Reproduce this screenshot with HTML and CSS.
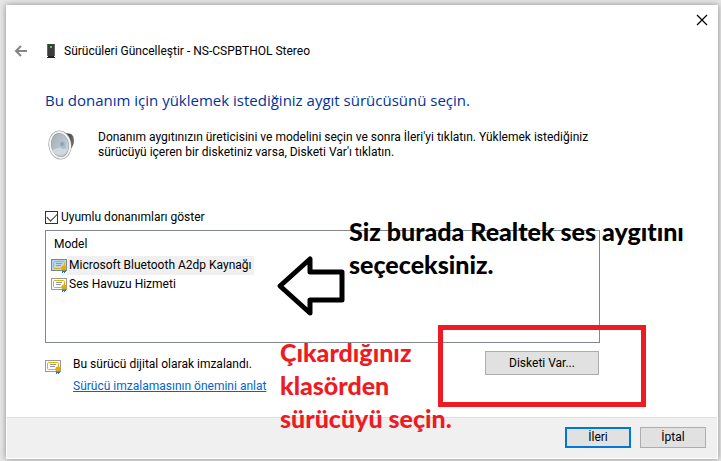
FILE: index.html
```html
<!DOCTYPE html>
<html lang="tr">
<head>
    <meta charset="UTF-8">
    <meta name="viewport" content="width=device-width, initial-scale=1.0">
    <title>Sürücüleri Güncelleştir</title>
    <link rel="stylesheet" href="styles.css">
</head>
<body>
    <svg class="symbols" aria-hidden="true">
        <symbol id="certificate" viewBox="0 0 16 14">
            <rect class="paper" x="0.5" y="0.5" width="15" height="11"/>
            <rect x="2.5" y="2.5" width="11" height="7" rx="1" fill="none" stroke="#e5b000"/>
            <path d="M5 4.5h6M5 6.5h5" stroke="#8f98a3"/>
            <path d="M11 11h4v2h-1v1h-1v-1h-1v1h-1z" fill="#1c78d0"/>
            <circle cx="13" cy="9" r="2.6" fill="#e5ab00"/>
        </symbol>
    </svg>

    <main class="dialog">
        <div class="titlebar">
            <button class="close" type="button" aria-label="Kapat">
                <svg width="12" height="12" viewBox="0 0 12 12"><path d="M1 1l10 10M11 1L1 11" stroke="#000" stroke-width="1.2"/></svg>
            </button>
        </div>

        <header>
            <button class="back" type="button" aria-label="Geri">
                <svg width="14" height="12" viewBox="0 0 14 12"><path d="M13 6H2M7 1L2 6l5 5" fill="none" stroke="#858585" stroke-width="2"/></svg>
            </button>
            <svg class="device" width="10" height="16" viewBox="0 0 10 16">
                <path d="M1 1h8v12H1z" fill="#3c3c3c"/>
                <path d="M1 1h1v12H1zM8 1h1v12H8z" fill="#666"/>
                <path d="M4 3h2v2H4z" fill="#36dd42"/>
                <path d="M2 13h6v1H2zM1 14h8v1H1z" fill="#222"/>
            </svg>
            <span>Sürücüleri Güncelleştir - NS-CSPBTHOL Stereo</span>
        </header>

        <div class="content">
            <h1>Bu donanım için yüklemek istediğiniz aygıt sürücüsünü seçin.</h1>

            <div class="intro">
                <svg class="speaker" width="28" height="30" viewBox="0 0 28 30">
                    <defs>
                        <linearGradient id="cone" x1="0" y1="0" x2="1" y2="1">
                            <stop offset="0" stop-color="#9aa8af"/>
                            <stop offset="1" stop-color="#d5dfe4"/>
                        </linearGradient>
                        <linearGradient id="magnet" x1="0" y1="0" x2="1" y2="0">
                            <stop offset="0" stop-color="#aaa"/>
                            <stop offset="0.7" stop-color="#4a4a4a"/>
                            <stop offset="1" stop-color="#777"/>
                        </linearGradient>
                    </defs>
                    <path d="M10 1l8 2 5 1c3 2 3 5 3 8-1 5-3 7-6 8l-7 7z" fill="url(#magnet)"/>
                    <ellipse cx="12" cy="15" rx="10" ry="13" transform="rotate(-8 12 15)" fill="url(#cone)" stroke="#8f8f8f" stroke-width="3"/>
                    <ellipse cx="12" cy="15" rx="10" ry="13" transform="rotate(-8 12 15)" fill="none" stroke="#f3f3f3" stroke-width="2"/>
                    <path d="M4 20c3 6 10 7 15 1l-5-4z" fill="#cfdae0"/>
                    <ellipse cx="15" cy="15" rx="3" ry="4" fill="#a9bec8"/>
                    <ellipse cx="14" cy="14" rx="2" ry="2" fill="#86a7b8"/>
                </svg>
                <p>Donanım aygıtınızın üreticisini ve modelini seçin ve sonra İleri'yi tıklatın. Yüklemek istediğiniz<br>sürücüyü içeren bir disketiniz varsa, Disketi Var'ı tıklatın.</p>
            </div>

            <label class="compatible">
                <input type="checkbox" checked>
                <span>Uyumlu donanımları göster</span>
            </label>

            <div class="models">
                <div class="models-head">Model</div>
                <ul>
                    <li class="selected"><svg class="cert"><use href="#certificate"/></svg><span>Microsoft Bluetooth A2dp Kaynağı</span></li>
                    <li><svg class="cert"><use href="#certificate"/></svg><span>Ses Havuzu Hizmeti</span></li>
                </ul>

                <svg class="arrow" width="70" height="62" viewBox="0 0 70 62">
                    <path d="M4 31L34 4v13h32v28H34v13z" fill="#fff" stroke="#000" stroke-width="5" stroke-linejoin="round"/>
                </svg>
                <p class="note note-black">Siz burada Realtek ses aygıtını<br>seçeceksiniz.</p>
                <p class="note note-red">Çıkardığınız<br>klasörden<br>sürücüyü seçin.</p>
            </div>

            <div class="signed">
                <svg class="cert"><use href="#certificate"/></svg>
                <div class="signed-text">
                    <p>Bu sürücü dijital olarak imzalandı.</p>
                    <a href="#">Sürücü imzalamasının önemini anlat</a>
                </div>
                <div class="disk">
                    <button class="btn btn-disk" type="button">Disketi Var...</button>
                    <div class="frame"></div>
                </div>
            </div>
        </div>

        <footer>
            <button class="btn btn-default" type="button">İleri</button>
            <button class="btn" type="button">İptal</button>
        </footer>
    </main>
</body>
</html>
```
FILE: styles.css
```css
* {
    box-sizing: border-box;
}

body {
    margin: 0;
    padding: 5px 3px 2px 6px;
    min-height: 100vh;
    display: flex;
    background-color: #e6e6e6;
    color: #000;
    font-family: Roboto, "Noto Sans", sans-serif;
    font-size: 12px;
    line-height: 15px;
}

p, h1, ul {
    margin: 0;
    padding: 0;
}

button {
    font: inherit;
    color: inherit;
    padding: 0;
}

.symbols {
    position: absolute;
    width: 0;
    height: 0;
}

.dialog {
    flex: 1;
    min-width: 0;
    display: flex;
    flex-direction: column;
    background-color: #fff;
    border: 1px solid #fff;
    box-shadow: 0 0 6px rgba(0, 0, 0, 0.4);
}

.titlebar {
    display: flex;
    justify-content: flex-end;
    padding: 8px 9px 0 0;
}

.close, .back {
    display: flex;
    border: none;
    background: none;
}

header {
    display: flex;
    align-items: center;
    height: 32px;
    margin-top: 9px;
    padding-left: 7px;
}

.device {
    margin: 0 8px 0 18px;
}

.content {
    flex: 1;
    padding: 0 117px 0 38px;
}

h1 {
    margin-top: 23px;
    font-family: "Open Sans", "Noto Sans", sans-serif;
    font-size: 15px;
    font-weight: normal;
    line-height: 20px;
    color: #003399;
}

.intro {
    display: flex;
    gap: 22px;
    margin-top: 20px;
    padding-left: 3px;
}

.speaker {
    flex: none;
}

.intro p {
    white-space: nowrap;
}

.compatible {
    display: flex;
    align-items: center;
    gap: 3px;
    margin-top: 50px;
}

.compatible input {
    appearance: none;
    width: 13px;
    height: 13px;
    margin: 0;
    border: 1px solid #333;
    background-color: #fff;
    display: grid;
    place-items: center;
}

.compatible input:checked::before {
    content: "";
    width: 9px;
    height: 5px;
    margin-bottom: 3px;
    border: solid #333;
    border-width: 0 0 1px 1px;
    transform: rotate(-45deg);
}

.models {
    position: relative;
    height: 113px;
    margin-top: 5px;
    padding: 6px 5px;
    border: 1px solid #828790;
}

.models-head {
    padding: 0 3px;
    margin-bottom: 4px;
}

.models ul {
    list-style: none;
}

.models li {
    display: flex;
    align-items: center;
    width: max-content;
    height: 19px;
}

.models li span {
    padding: 2px;
}

.models .selected span {
    background-color: #f0f0f0;
}

.cert {
    --paper: #fff;
    --edge: #999;
    flex: none;
    width: 16px;
    height: 14px;
}

.selected .cert {
    --paper: #b9d8ee;
    --edge: #6689a8;
}

.paper {
    fill: var(--paper);
    stroke: var(--edge);
}

.arrow {
    position: absolute;
    left: 230px;
    top: 24px;
}

.note {
    position: absolute;
    font-family: Lato, "Open Sans", sans-serif;
    font-size: 25px;
    font-weight: 900;
    font-variant-ligatures: none;
    line-height: 33px;
    white-space: nowrap;
}

.note-black {
    left: 303px;
    top: -16px;
}

.note-red {
    left: 234px;
    top: 105px;
    color: #ed1c24;
}

.signed {
    display: flex;
    align-items: flex-start;
    margin-top: 8px;
}

.signed .cert {
    margin-top: 9px;
}

.signed-text {
    flex: 1;
    padding: 6px 0 0 12px;
}

.signed-text a {
    display: inline-block;
    margin-top: 7px;
    color: #0066cc;
}

.disk {
    position: relative;
    margin-right: 1px;
}

.frame {
    position: absolute;
    inset: -26px -47px -32px;
    border: 5px solid #ed1c24;
    pointer-events: none;
}

.btn {
    width: 66px;
    height: 21px;
    border: 1px solid #adadad;
    background-color: #e1e1e1;
}

.btn-disk {
    display: block;
    width: 114px;
    height: 24px;
}

.btn-default {
    border: 2px solid #0078d7;
}

footer {
    display: flex;
    justify-content: flex-end;
    gap: 9px;
    padding: 9px 11px 10px;
    border-top: 1px solid #dfdfdf;
    background-color: #f0f0f0;
}
```
